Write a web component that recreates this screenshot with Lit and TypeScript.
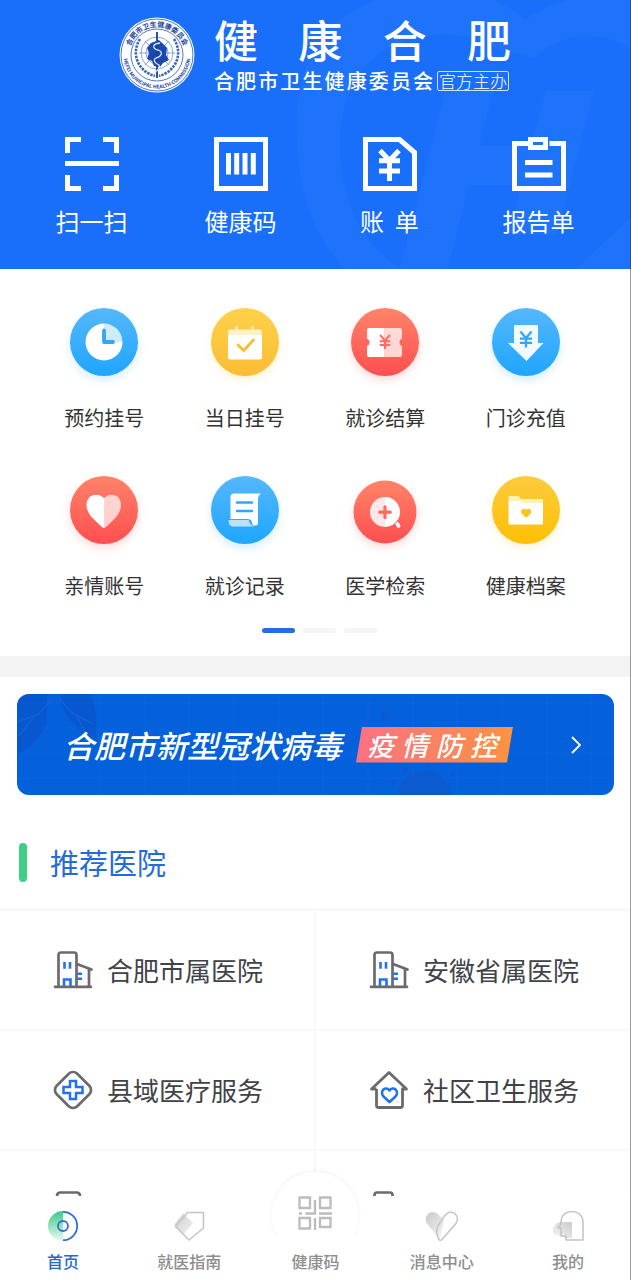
import { LitElement, html, css, svg } from "lit";
import { customElement } from "lit/decorators.js";

const yen = (x: number, y: number, s: number, color: string, w: number) => svg`
  <path d="M${x - s * 0.7} ${y - s}L${x} ${y - s * 0.2}L${x + s * 0.7} ${y - s}M${x} ${y - s * 0.2}V${y + s}M${x - s * 0.75} ${y - s * 0.1}H${x + s * 0.75}M${x - s * 0.75} ${y + s * 0.42}H${x + s * 0.75}"
    fill="none" stroke=${color} stroke-width=${w} />`;

const quickIcons = {
  scan: svg`<path d="M2.5 16V2.5H16M38 2.5H51.5V16M51.5 38V51.5H38M16 51.5H2.5V38M0 26.5H54" />`,
  code: svg`<path d="M2.5 2.5H51.5V51.5H2.5ZM14.5 16V37.500M22.700 16V37.500M31 16V37.500M39.300 16V37.500" />`,
  bill: svg`<path d="M2.500 2.500H36.500L51.500 15.500V51.500H2.500Z" />
    <path d="M17 13.500L26.500 23.500L36 13.500M26.500 23V44M16 23.700H37M16 34H37" />`,
  report: svg`<path d="M16.500 6.500H2.500V51.500H51.500V6.500H37.500" />
    <path d="M18.500 2.500H33.500V10.500H18.500Z" /><path d="M13 25.500H40.500M13 38H40.500" />`,
};

const serviceIcons = {
  clock: svg`<circle cx="34" cy="34" r="34" fill="url(#blue)" />
    <path d="M34 34V15.500A18.500 18.500 0 1 0 52.500 34Z" fill="#fff" />
    <path d="M34 34V15.500A18.500 18.500 0 0 1 52.500 34Z" fill="#fff" fill-opacity=".75" />
    <path d="M34 22.500V34H43" fill="none" stroke="#35a5f7" stroke-width="3.800" stroke-linecap="round" stroke-linejoin="round" />`,
  calendar: svg`<circle cx="34" cy="34" r="34" fill="url(#gold)" />
    <path d="M17 27V23.500Q17 21.500 19 21.500H24.500V18.500H27V21.500H40.500V18.500H43V21.500H49Q51 21.500 51 23.500V27Z" fill="#fff2c8" />
    <path d="M17 27H51V49Q51 51.500 48.500 51.500H19.500Q17 51.500 17 49Z" fill="#fff" />
    <path d="M27 37L32.700 42.500L42.500 32" fill="none" stroke="#fbbd2e" stroke-width="2.800" stroke-linecap="round" />`,
  ticket: svg`<circle cx="34" cy="34" r="34" fill="url(#red)" />
    <path d="M33.500 20H18Q16 20 16 22V30.500A4 4 0 0 1 16 38V47Q16 49 18 49H33.500Z" fill="#fff" />
    <path d="M33.500 20H49Q51 20 51 22V30.500A4 4 0 0 0 51 38V47Q51 49 49 49H33.500Z" fill="#fff" fill-opacity=".74" />
    ${yen(34, 34, 7, "#ff6a62", 2)}`,
  arrow: svg`<circle cx="34" cy="34" r="34" fill="url(#blue)" />
    <path d="M23 17H45Q46 17 46 18V35H51.500L34.500 53L16 35H22V18Q22 17 23 17Z" fill="#fff" fill-opacity=".93" />
    ${yen(34, 31.5, 8, "#35a5f7", 2.3)}`,
  heart: svg`<circle cx="34" cy="34" r="34" fill="url(#red)" />
    <path d="M34 22C28 16 16.500 18 16.500 29C16.500 38 25 44.500 32 51Q33 52 34 52Z" fill="#fff" />
    <path d="M34 22C40 16 51 18 51 29C51 38 43 44.500 36 51Q35 52 34 52Z" fill="#fff" fill-opacity=".7" />`,
  record: svg`<circle cx="34" cy="34" r="34" fill="url(#blue)" />
    <path d="M23 17.500H50Q47 19.500 47 23V47Q47 49.500 44.500 49.500H42L40 44L37 43H19.500V21Q19.500 17.500 23 17.500Z" fill="#fff" />
    <path d="M17.500 44H37.500Q39 49 43 50.500H22Q17.500 50.500 17.500 44Z" fill="#b9e2ff" />
    <path d="M26 26.500H41M26 35H41" stroke="#35a5f7" stroke-width="2.500" stroke-linecap="round" />`,
  search: svg`<circle cx="34" cy="36" r="31.500" fill="url(#red)" />
    <circle cx="34" cy="36" r="15" fill="#fff" /><path d="M34 21A15 15 0 0 0 34 51Z" fill="#ff6a62" fill-opacity=".15" />
    <ellipse cx="47" cy="49" rx="2" ry="3" fill="#fff" transform="rotate(-30 47 49)" />
    <path d="M34 31V41.500M28.700 36.200H39.300" stroke="#ff6a62" stroke-width="3.300" stroke-linecap="round" />`,
  folder: svg`<circle cx="34" cy="34" r="34" fill="url(#amber)" />
    <path d="M16.500 27V20H26L29.500 23H51V27Z" fill="#fff0bd" />
    <path d="M16.500 25H29L32 27H51V48.500H16.500Z" fill="#fff" />
    <path d="M34.200 42L29.700 37.500C27.500 34.500 32 31 34.200 34C36.500 31 41 34.500 38.700 37.500Z" fill="#fcc41f" />`,
};

const building = svg`
  <g fill="none" stroke="#6a6b6f" stroke-width="2.700" stroke-linecap="round">
    <path d="M5.500 36.500V5Q5.500 2.500 8 2.500H21Q23.500 2.500 23.500 5V36.500M24 14L38.500 19.500M36 19V36.500M2 36.800H38" /></g>
  <g fill="none" stroke="#2271f0" stroke-width="2.600">
    <path d="M11.500 12V18.700M17 12V18.700M11 36V29.500H17.500V36M24.500 23.700H29M24.500 28.700H29" /></g>`;

const cellIcons = {
  building,
  clinic: svg`
    <rect x="5.500" y="5.500" width="29" height="29" rx="6" transform="rotate(45 20 20)" fill="none" stroke="#6a6b6f" stroke-width="2.700" />
    <path d="M17 11H23V17H29.500V23H23V29H17V23H10.500V17H17Z" fill="none" stroke="#2271f0" stroke-width="2.500" />`,
  house: svg`
    <path d="M7.500 19V35.500Q7.500 37.500 9.500 37.500H31.500Q33.500 37.500 33.500 35.500V19H37.500L20 2.500L2.500 19H7.500" fill="none" stroke="#6a6b6f" stroke-width="2.800" stroke-linejoin="round" />
    <path d="M20.500 32L14.500 26.500C10 21 17 15.500 20.500 20.500C24 15.500 31 21 26.500 26.500Z" fill="none" stroke="#2271f0" stroke-width="2.600" stroke-linejoin="round" />`,
  block: svg`
    <path d="M4 37V6Q4 2.500 7.500 2.500H23.500Q27 2.500 27 6V37Z" fill="none" stroke="#6a6b6f" stroke-width="2.700" />`,
};

const tabIcons = {
  home: svg`
    <defs><linearGradient id="mint" x1="0" y1="0" x2="0" y2="1"><stop offset="0" stop-color="#3fc98a" /><stop offset="1" stop-color="#e8faf1" /></linearGradient></defs>
    <path d="M15 0A15 15 0 0 0 15 30Z" fill="url(#mint)" />
    <path d="M15 .8A14.200 14.200 0 0 1 15 29.200" fill="none" stroke="#2f6fd6" stroke-width="1.800" />
    <circle cx="15" cy="15" r="5" fill="none" stroke="#2f6fd6" stroke-width="1.800" />`,
  guide: svg`
    <defs><linearGradient id="ash1" x1="0" y1="0" x2="1" y2="1"><stop offset="0" stop-color="#ccc" /><stop offset="1" stop-color="#f3f3f3" /></linearGradient></defs>
    <path d="M9 2.500L19 12L10 23L0 14Z" fill="url(#ash1)" />
    <path d="M13.500 1.500H29.500V17L15 29L1.500 15.500Z" fill="none" stroke="#c4c4c4" stroke-width="1.500" stroke-linejoin="round" />`,
  message: svg`
    <defs><linearGradient id="ash2" x1="0" y1="0" x2="1" y2="1"><stop offset="0" stop-color="#c8c8c8" /><stop offset="1" stop-color="#f7f7f7" /></linearGradient></defs>
    <path d="M13 28L1 14C-6 5 5-4 12 4L17 9Z" fill="url(#ash2)" />
    <path d="M12 28.500C9 24 9 19 11.500 14L17.500 5C24-4 35 5 28.500 13L15 28.500Q13 30 12 28.500Z" fill="none" stroke="#c4c4c4" stroke-width="1.500" />`,
  mine: svg`
    <defs><linearGradient id="ash3" x1="1" y1="0" x2="0" y2="1"><stop offset="0" stop-color="#ccc" /><stop offset="1" stop-color="#f5f5f5" /></linearGradient></defs>
    <path d="M8 11H19V27H11V23A8 8 0 0 1 0 22A9 9 0 0 1 8 11Z" fill="url(#ash3)" />
    <path d="M8 13V11C8-3 30-3 30 11V29H13V25H8V17H5L8 13" fill="none" stroke="#c4c4c4" stroke-width="1.500" stroke-linejoin="round" />`,
};

const services: [keyof typeof serviceIcons, string, string][] = [
  ["clock", "预约挂号", "glow-blue"],
  ["calendar", "当日挂号", "glow-gold"],
  ["ticket", "就诊结算", "glow-red"],
  ["arrow", "门诊充值", "glow-blue"],
  ["heart", "亲情账号", "glow-red"],
  ["record", "就诊记录", "glow-blue"],
  ["search", "医学检索", "glow-red"],
  ["folder", "健康档案", "glow-gold"],
];

const quick: [keyof typeof quickIcons, string][] = [
  ["scan", "扫一扫"],
  ["code", "健康码"],
  ["bill", "账  单"],
  ["report", "报告单"],
];

const hospitals: [keyof typeof cellIcons, string][] = [
  ["building", "合肥市属医院"],
  ["building", "安徽省属医院"],
  ["clinic", "县域医疗服务"],
  ["house", "社区卫生服务"],
  ["block", ""],
  ["building", ""],
];

@customElement("app-header")
class AppHeader extends LitElement {
  static styles = css`
    :host {
      display: block;
      position: relative;
      background: #196ffa;
      color: #fff;
      overflow: hidden;
    }
    .watermark {
      position: absolute;
      top: 0;
      right: 0;
      width: 340px;
      height: 269px;
    }
    .content {
      position: relative;
      padding: 17px 18px 33px 17px;
    }
    .brand {
      display: flex;
      justify-content: center;
      gap: 19px;
    }
    .emblem {
      width: 76px;
      height: 76px;
      flex: none;
    }
    .names {
      width: 297px;
    }
    h1 {
      margin: 0;
      font-size: 44px;
      line-height: 44px;
      font-weight: 500;
      text-align-last: justify;
    }
    .owner {
      display: flex;
      align-items: center;
      gap: 4px;
      margin-top: 10px;
      padding-right: 2px;
    }
    .org {
      flex: 1;
      font-size: 20px;
      line-height: 20px;
      font-weight: 500;
      text-align-last: justify;
      white-space: nowrap;
    }
    .badge {
      font-size: 17px;
      line-height: 18px;
      font-weight: 300;
      padding: 0 1px;
      border: 1px solid #cfe1ff;
      border-radius: 2px;
    }
    .quick {
      display: grid;
      grid-template-columns: repeat(4, 1fr);
      margin-top: 44px;
    }
    button {
      all: unset;
      cursor: pointer;
      display: flex;
      flex-direction: column;
      align-items: center;
      gap: 15px;
      font-size: 24px;
      line-height: 30px;
      white-space: pre;
    }
    button svg {
      width: 54px;
      height: 54px;
      fill: none;
      stroke: #fff;
      stroke-width: 5;
    }
  `;

  render() {
    return html`
      <svg class="watermark" viewBox="291 0 340 269" fill="#fff" fill-opacity=".028" aria-hidden="true">
        <path fill-rule="evenodd" d="M297 125C297 60 325 20 375 0H495C505 5 516 12 525 20C512 30 505 40 500 50C484 39 466 35 444 35C380 35 340 75 340 145C340 205 365 245 400 269H345C312 235 297 190 297 125Z" />
        <path d="M525 20C550 2 590-12 631-5V48C600 30 560 32 535 58L500 50C505 40 512 30 525 20Z" />
        <path d="M445 91H493L479 146H531L546 91H594L557 235H509L521 185H469L448 269H400Z" />
        <path d="M631 217V269H576Z" />
      </svg>
      <div class="content">
        <div class="brand">
          <svg class="emblem" viewBox="0 0 76 76" role="img" aria-label="合肥市卫生健康委员会">
            <defs>
              <path id="arcTop" d="M10 38A28 28 0 0 1 66 38" />
              <path id="arcBottom" d="M4.500 38A33.500 33.500 0 0 0 71.500 38" />
            </defs>
            <circle cx="38" cy="38" r="37.500" fill="#fff" />
            <circle cx="38" cy="38" r="36" fill="none" stroke="#2456b8" stroke-width=".8" />
            <circle cx="38" cy="38" r="26" fill="none" stroke="#2456b8" stroke-width=".8" />
            <g fill="#173f9c" font-weight="700" text-anchor="middle">
              <text font-size="7"><textPath href="#arcTop" startOffset="50%">合肥市卫生健康委员会</textPath></text>
              <text font-size="5"><textPath href="#arcBottom" startOffset="50%">HEFEI MUNICIPAL HEALTH COMMISSION</textPath></text>
            </g>
            <g fill="none" stroke="#5c83d2" stroke-width=".7">
              <circle cx="38" cy="36" r="16" /><circle cx="38" cy="36" r="11" />
              <path d="M20 36H56M26 24L50 48M50 24L26 48" />
            </g>
            <g fill="none" stroke="#3a66c0" stroke-width="2.600" stroke-dasharray="2.500 1">
              <path d="M21 22C12 36 18 54 36 59M55 22C64 36 58 54 40 59" />
            </g>
            <path d="M32 26L40 23L45 28L48 31L47 38L50 43L44 46L41 50L35 49L33 44L28 42L30 36L28 31Z" fill="#1b49ab" />
            <path d="M38 15V61" stroke="#173f9c" stroke-width="1.800" />
            <path d="M41 26C32 27 34 32 39 33C45 35 42 40 37 41C33 43 37 47 40 48C42 51 38 54 36 55" fill="none" stroke="#dce8ff" stroke-width="1.300" />
          </svg>
          <div class="names">
            <h1>健康合肥</h1>
            <div class="owner">
              <span class="org">合肥市卫生健康委员会</span><span class="badge">官方主办</span>
            </div>
          </div>
        </div>
        <div class="quick">
          ${quick.map(
            ([icon, label]) => html`<button type="button">
              <svg viewBox="0 0 54 54" aria-hidden="true">${quickIcons[icon]}</svg><span>${label}</span>
            </button>`
          )}
        </div>
      </div>
    `;
  }
}

@customElement("service-grid")
class ServiceGrid extends LitElement {
  static styles = css`
    :host {
      display: block;
      padding: 39px 35px 23px 34px;
    }
    .grid {
      display: grid;
      grid-template-columns: repeat(4, 1fr);
      row-gap: 42px;
    }
    button {
      all: unset;
      cursor: pointer;
      display: flex;
      flex-direction: column;
      align-items: center;
      gap: 28px;
      font-size: 20px;
      line-height: 28px;
      padding-bottom: 2px;
      color: #333;
    }
    button svg {
      width: 68px;
      height: 68px;
      overflow: visible;
    }
    .glow-blue {
      filter: drop-shadow(0 4px 4px rgba(60, 170, 250, 0.22));
    }
    .glow-gold {
      filter: drop-shadow(0 4px 4px rgba(255, 200, 60, 0.22));
    }
    .glow-red {
      filter: drop-shadow(0 4px 4px rgba(255, 90, 80, 0.22));
    }
    .pager {
      display: flex;
      justify-content: center;
      gap: 8px;
      margin-top: 26px;
      padding-left: 8px;
    }
    .dot {
      width: 33px;
      height: 5px;
      border-radius: 3px;
      background: #f5f5f5;
    }
    .dot.on {
      background: #256de6;
    }
  `;

  render() {
    return html`
      <div class="grid">
        ${services.map(
          ([icon, label, glow]) => html`<button type="button">
            <svg class=${glow} viewBox="0 0 68 68" aria-hidden="true">
              <defs>
                <linearGradient id="blue" x1="0" y1="0" x2="0" y2="1"><stop offset="0" stop-color="#56b7fb" /><stop offset="1" stop-color="#1ea6ff" /></linearGradient>
                <linearGradient id="gold" x1="0" y1="0" x2="0" y2="1"><stop offset="0" stop-color="#fcd24a" /><stop offset="1" stop-color="#fdbc35" /></linearGradient>
                <linearGradient id="amber" x1="0" y1="0" x2="0" y2="1"><stop offset="0" stop-color="#fccb3e" /><stop offset="1" stop-color="#fdc004" /></linearGradient>
                <linearGradient id="red" x1="0" y1="0" x2="0" y2="1"><stop offset="0" stop-color="#ff8468" /><stop offset="1" stop-color="#ff4e50" /></linearGradient>
              </defs>
              ${serviceIcons[icon]}
            </svg>
            <span>${label}</span>
          </button>`
        )}
      </div>
      <div class="pager"><span class="dot on"></span><span class="dot"></span><span class="dot"></span></div>
    `;
  }
}

@customElement("promo-banner")
class PromoBanner extends LitElement {
  static styles = css`
    :host {
      display: block;
      padding: 17px 17px 0;
    }
    .banner {
      display: flex;
      align-items: center;
      position: relative;
      overflow: hidden;
      height: 101px;
      padding: 0 33px 0 46px;
      border-radius: 12px;
      background: #0560dc;
      color: #fff;
      text-decoration: none;
    }
    .art {
      position: absolute;
      left: 0;
      top: 0;
      width: 597px;
      height: 101px;
    }
    .title,
    .tag,
    .chevron {
      position: relative;
    }
    .title {
      font-size: 31px;
      line-height: 40px;
      font-weight: 500;
      font-style: italic;
      white-space: nowrap;
    }
    .tag {
      width: 130px;
      margin-left: 14px;
      padding: 0 16px 0 11px;
      font-size: 27px;
      line-height: 36px;
      font-style: italic;
      font-weight: 500;
      text-align-last: justify;
      background: linear-gradient(90deg, #fb7183, #fb9340);
      clip-path: polygon(6px 0, 100% 0, calc(100% - 6px) 100%, 0 100%);
    }
    .chevron {
      width: 10px;
      height: 18px;
      margin-left: auto;
    }
  `;

  render() {
    return html`
      <a class="banner" href="#epidemic">
        <svg class="art" viewBox="0 0 597 101" aria-hidden="true">
          <path d="M0 9H597M0 34H597M0 59H597M0 84H597M83 0V101M128 0V101M172 0V101M217 0V101M262 0V101M306 0V101M351 0V101M396 0V101M440 0V101M485 0V101M530 0V101M574 0V101" stroke="#1b6ee0" stroke-opacity=".3" stroke-width="1" />
          <path d="M0 0H30V28C24 44 14 54 0 60ZM44 0H74C80 16 80 32 78 44C64 40 50 26 44 10Z" fill="#0b4fc0" fill-opacity=".45" />
          <path d="M0 28L22 20L34 6M2 42L16 24M76 30L54 18L42 4M70 42L60 22" fill="none" stroke="#2a76e0" stroke-opacity=".5" />
          <g fill="#1a50b8" fill-opacity=".35"><path d="M382 101C380 88 392 77 408 77C424 77 432 88 434 101Z" />
            <circle cx="377" cy="88" r="3" /><circle cx="388" cy="75" r="3" /><circle cx="411" cy="71" r="2" /><circle cx="436" cy="80" r="2" /><circle cx="368" cy="22" r="4" /></g>
        </svg>
        <span class="title">合肥市新型冠状病毒</span>
        <span class="tag">疫情防控</span>
        <svg class="chevron" viewBox="0 0 10 18" fill="none" stroke="#fff" stroke-width="1.800" aria-hidden="true"><path d="M1 1L9 9L1 17" /></svg>
      </a>
    `;
  }
}

@customElement("hospital-list")
class HospitalList extends LitElement {
  static styles = css`
    :host {
      display: block;
    }
    header {
      display: flex;
      align-items: center;
      gap: 23px;
      padding: 48px 19px 26px;
      border-bottom: 3px solid #f8f8f8;
    }
    .bar {
      width: 8px;
      height: 39px;
      border-radius: 4px;
      background: #3ccf85;
    }
    h2 {
      margin: 0;
      font-size: 29px;
      line-height: 39px;
      font-weight: 400;
      color: #256ad8;
    }
    .cells {
      display: grid;
      grid-template-columns: 1fr 1fr;
      gap: 2px;
      padding-right: 1px;
      background: #f9f9f9;
    }
    a {
      display: flex;
      align-items: center;
      gap: 14px;
      height: 118px;
      padding-left: 53px;
      background: #fff;
      color: #3f4247;
      font-size: 26px;
      line-height: 36px;
      text-decoration: none;
      white-space: nowrap;
    }
    a svg {
      width: 40px;
      height: 40px;
      flex: none;
    }
  `;

  render() {
    return html`
      <header><span class="bar"></span><h2>推荐医院</h2></header>
      <div class="cells">
        ${hospitals.map(
          ([icon, label]) => html`<a href="#hospital">
            <svg viewBox="0 0 40 40" aria-hidden="true">${cellIcons[icon]}</svg><span>${label}</span>
          </a>`
        )}
      </div>
    `;
  }
}

@customElement("tab-bar")
class TabBar extends LitElement {
  static styles = css`
    :host {
      display: block;
      position: relative;
      background: #fff;
    }
    nav {
      display: grid;
      grid-template-columns: repeat(5, 1fr);
      height: 84px;
    }
    a {
      position: relative;
      display: flex;
      flex-direction: column;
      align-items: center;
      gap: 10px;
      padding-top: 15px;
      color: #8d8d8d;
      font-size: 16px;
      line-height: 20px;
      font-weight: 500;
      text-decoration: none;
    }
    a.on {
      color: #2568d0;
    }
    .icon {
      width: 30px;
      height: 30px;
      overflow: visible;
    }
    .hub {
      justify-content: flex-end;
      padding: 0 0 9px;
    }
    .disc {
      position: absolute;
      box-sizing: border-box;
      top: -24px;
      left: calc(50% - 43px);
      width: 86px;
      height: 86px;
      padding-bottom: 5px;
      display: grid;
      place-items: center;
      border-radius: 50%;
      background: linear-gradient(#fff 60%, transparent 60%);
      box-shadow: 0 -1px 5px rgba(0, 0, 0, 0.06);
      clip-path: inset(-8px -8px 22px -8px);
    }
    .disc svg {
      width: 34px;
      height: 34px;
    }
    .hub span {
      position: relative;
    }
  `;

  tab(icon: keyof typeof tabIcons, label: string, on = false) {
    return html`<a href="#${icon}" class=${on ? "on" : ""}>
      <svg class="icon" viewBox="0 0 30 30" aria-hidden="true">${tabIcons[icon]}</svg><span>${label}</span>
    </a>`;
  }

  render() {
    return html`
      <nav>
        ${this.tab("home", "首页", true)} ${this.tab("guide", "就医指南")}
        <a href="#code" class="hub">
          <i class="disc">
            <svg viewBox="0 0 34 34" fill="none" stroke="#bcbcbc" stroke-width="2.300" aria-hidden="true">
              <path d="M1.500 1.500H12V12H1.500ZM22 1.500H32.500V12H22ZM1.500 22H12V32.500H1.500ZM22 22H32.500V31H22ZM17 4V17.500H7.500M1 17.500H4M21 17.500H34M17 22V34" />
            </svg>
          </i>
          <span>健康码</span>
        </a>
        ${this.tab("message", "消息中心")} ${this.tab("mine", "我的")}
      </nav>
    `;
  }
}

@customElement("app-root")
class AppRoot extends LitElement {
  static styles = css`
    :host {
      display: flex;
      flex-direction: column;
      position: relative;
      height: 100vh;
      background: #fff;
      font-family: "Noto Sans CJK SC", "Noto Sans", sans-serif;
    }
    :host::after {
      content: "";
      position: absolute;
      top: 0;
      right: 0;
      bottom: 0;
      width: 1px;
      background: rgba(40, 40, 40, 0.45);
      pointer-events: none;
    }
    main {
      flex: 1;
      min-height: 0;
      overflow-y: auto;
      scrollbar-width: none;
    }
    .divider {
      height: 21px;
      background: #f4f4f4;
    }
  `;

  render() {
    return html`
      <main>
        <app-header></app-header>
        <service-grid></service-grid>
        <div class="divider"></div>
        <promo-banner></promo-banner>
        <hospital-list></hospital-list>
      </main>
      <tab-bar></tab-bar>
    `;
  }
}
